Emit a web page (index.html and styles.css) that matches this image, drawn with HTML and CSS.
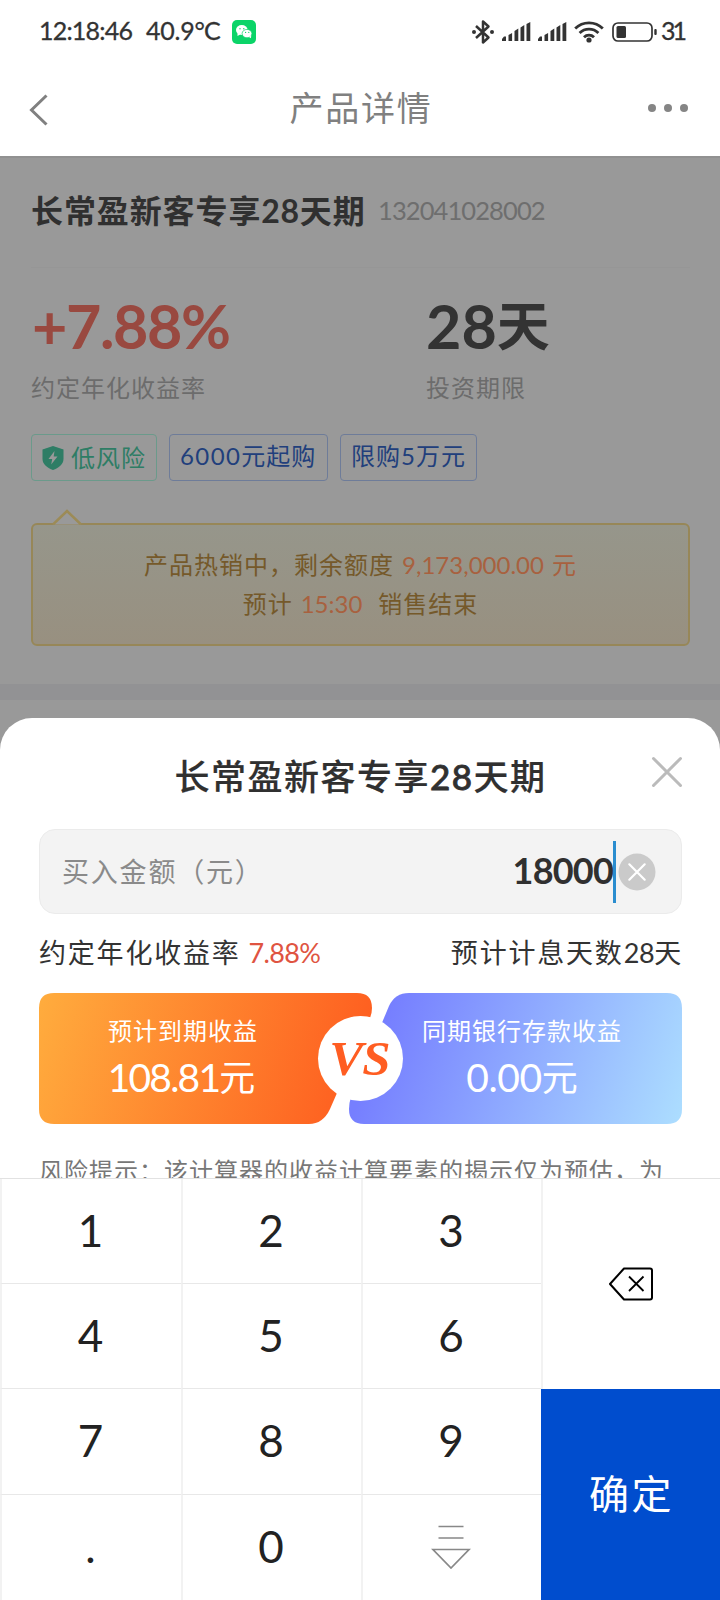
FILE: index.html
```html
<!DOCTYPE html>
<html lang="zh-CN">
<head>
<meta charset="utf-8">
<title>产品详情</title>
<link rel="stylesheet" href="styles.css">
</head>
<body>
<div class="screen">
  <div class="status">
    <span class="clock">12:18:46</span>
    <span class="temp">40.9<span class="deg">°</span>C</span>
    <svg class="wechat" width="24" height="24" viewBox="0 0 24 24"><rect width="24" height="24" rx="5" fill="#0bd468"/><ellipse cx="9.800" cy="10" rx="5.800" ry="4.900" fill="#fff"/><path d="M5.500 13 5.500 16 8.500 14.300z" fill="#fff"/><ellipse cx="15" cy="13.600" rx="4.900" ry="4.200" fill="#fff" stroke="#0bd468" stroke-width=".7"/><path d="M17 17l2 1.200.2-2.600z" fill="#fff"/><g fill="#0bd468"><circle cx="8" cy="8.700" r=".7"/><circle cx="11.800" cy="8.700" r=".7"/><circle cx="13.600" cy="12.400" r=".6"/><circle cx="16.800" cy="12.400" r=".6"/></g></svg>
    <div class="status-right">
      <svg class="bt" width="24" height="26" viewBox="0 0 24 26"><path d="M5 7 17.500 18.500 12 23.500V2.500L17.500 7.500 5 19" fill="none" stroke="#333" stroke-width="2.500" stroke-linejoin="round"/><circle cx="3" cy="13" r="2" fill="#333"/><circle cx="21" cy="13" r="2" fill="#333"/></svg>
      <svg class="sig" width="29" height="19" viewBox="0 0 29 19"><g fill="#333"><path d="M0 19v-2l2-2.500h2V19zM6.500 19v-6l3.600-2v8zM12.500 19V9l3.800-2.500V19zM18.500 19V5.500l3.800-2.500v16zM24.500 19V2l3.800-2v19z"/></g></svg>
      <svg class="sig2" width="29" height="19" viewBox="0 0 29 19"><g fill="#333"><path d="M0 19v-2l2-2.500h2V19zM6.500 19v-6l3.600-2v8zM12.500 19V9l3.800-2.500V19zM18.500 19V5.500l3.800-2.500v16zM24.500 19V2l3.800-2v19z"/></g></svg>
      <svg class="wifi" width="30" height="22" viewBox="0 0 30 22"><g fill="none" stroke="#333" stroke-width="2.800"><path d="M1.200 7.600a19.500 19.500 0 0 1 27.600 0"/><path d="M5.600 12a13.300 13.300 0 0 1 18.800 0"/><path d="M10 16.200a7.100 7.100 0 0 1 10 0"/></g><circle cx="15" cy="19" r="2.600" fill="#333"/></svg>
      <svg class="bat" width="46" height="20" viewBox="0 0 46 20"><rect x="1" y="1" width="39" height="18" rx="5" fill="none" stroke="#333" stroke-width="1.700"/><rect x="4.500" y="4" width="9.500" height="12" rx="1.500" fill="#333"/><rect x="42.300" y="7" width="2.400" height="6" rx="1" fill="#333"/></svg>
      <span class="pct">31</span>
    </div>
  </div>
  <div class="nav">
    <svg width="20" height="34" viewBox="0 0 20 34"><path d="M18.500 2.500 3.500 17l15 14.500" fill="none" stroke="#808080" stroke-width="3"/></svg>
    <h1 class="nav-title">产品详情</h1>
    <svg width="42" height="10" viewBox="0 0 42 10"><g fill="#858585"><circle cx="4" cy="5" r="4"/><circle cx="20" cy="5" r="4"/><circle cx="36" cy="5" r="4"/></g></svg>
  </div>
  <div class="product">
    <div class="p-head"><span class="p-name">长常盈新客专享<span class="p-days">28</span>天期</span><span class="p-id">132041028002</span></div>
    <div class="stats">
      <div class="stat"><div class="big rate">+7.88%</div><div class="cap">约定年化收益率</div></div>
      <div class="stat"><div class="big"><span class="n28">28</span><span class="day">天</span></div><div class="cap">投资期限</div></div>
    </div>
    <div class="tags">
      <span class="tag risk"><svg width="22" height="24" viewBox="0 0 22 24"><path d="M11 0 21.500 3.600V13c0 5.500-5 9-10.500 11C5.500 22 .5 18.500.5 13V3.600z" fill="#2e7d65"/><path d="M12.500 5 6.500 13h3.700l-1 5.500 6.300-8h-3.800z" fill="#999"/></svg>低风险</span>
      <span class="tag t2"><span class="n6">6000</span>元起购</span>
      <span class="tag t3">限购5万元</span>
    </div>
    <div class="notice">
      <svg class="tip" width="30" height="16" viewBox="0 0 30 16"><path d="M1 15.500 15 2l14 13.500" fill="#999" stroke="#9c8b57" stroke-width="2.500"/></svg>
      <div class="line l1">产品热销中，剩余额度<em class="amt">9,173,000.00</em><em>元</em></div>
      <div class="line l2">预计<em class="time">15:30</em>销售结束</div>
    </div>
    <div class="band"></div>
  </div>
  <div class="sheet">
    <div class="s-head"><h2>长常盈新客专享<span class="h-days">28</span>天期</h2>
      <svg class="close" width="32" height="32" viewBox="0 0 32 32"><path d="M2.500 2.500l27 27M29.500 2.500l-27 27" stroke="#bbb" stroke-width="3" stroke-linecap="round"/></svg>
    </div>
    <div class="field">
      <span class="f-label">买入金额（元）</span>
      <span class="f-value">18000</span><i class="cursor"></i>
      <svg width="38" height="38" viewBox="0 0 38 38"><circle cx="19" cy="19" r="18.500" fill="#cacaca"/><path d="M11.300 11.300l15.400 15.400M26.700 11.300 11.300 26.700" stroke="#fff" stroke-width="2.200" stroke-linecap="round"/></svg>
    </div>
    <div class="info"><span>约定年化收益率<b class="r2">7.88%</b></span><span class="days">预计计息天数<span class="d28">28</span>天</span></div>
    <div class="versus">
      <svg class="vs-bg" width="644" height="132" viewBox="0 0 644 132">
        <defs>
          <linearGradient id="o" gradientUnits="userSpaceOnUse" x1="0" y1="20" x2="310" y2="110"><stop offset="0" stop-color="#ffab3d"/><stop offset="1" stop-color="#fe5f20"/></linearGradient>
          <linearGradient id="b" gradientUnits="userSpaceOnUse" x1="345" y1="30" x2="640" y2="130"><stop offset="0" stop-color="#767fff"/><stop offset="1" stop-color="#acddff"/></linearGradient>
        </defs>
        <path d="M15 0H318Q333 0 333 15 333 20 331 25L291 116Q284 131 270 131H15Q0 131 0 116V15Q0 0 15 0z" fill="url(#o)"/>
        <path d="M370 0H628Q643 0 643 15V116Q643 131 628 131H325Q310 131 310 116 310 110 312 104L350 13Q356 0 370 0z" fill="url(#b)"/>
        <circle cx="321.500" cy="65.500" r="42.500" fill="#fff"/>
      </svg>
      <div class="card c1"><div class="c-label">预计到期收益</div><div class="c-num"><span class="n1">108.81</span><span class="yuan">元</span></div></div>
      <div class="vs"><span class="vs-text">VS</span></div>
      <div class="card c2"><div class="c-label">同期银行存款收益</div><div class="c-num"><span class="n0">0.00</span><span class="yuan">元</span></div></div>
    </div>
    <p class="hint">风险提示：该计算器的收益计算要素的揭示仅为预估，为</p>
  </div>
  <div class="pad">
    <div class="key">1</div><div class="key">2</div><div class="key">3</div>
    <div class="del"><svg width="46" height="34" viewBox="0 0 46 34"><path d="M2 17 16 1.500H42q2 0 2 2V30.500q0 2-2 2H16z" fill="none" stroke="#000" stroke-width="2" stroke-linejoin="round"/><path d="M21 9.500 35.500 24M35.500 9.500 21 24" stroke="#000" stroke-width="1.800"/></svg></div>
    <div class="key">4</div><div class="key">5</div><div class="key">6</div>
    <div class="key">7</div><div class="key">8</div><div class="key">9</div>
    <div class="ok">确定</div>
    <div class="key">.</div><div class="key">0</div>
    <div class="key"><svg width="40" height="46" viewBox="0 0 40 46"><g fill="none" stroke="#888" stroke-width="1.700"><path d="M7.500 3.500h25M7.500 15h25M2 26.500h36L20 45z"/></g></svg></div>
  </div>
</div>
</body>
</html>
```
FILE: styles.css
```css
* { box-sizing: border-box; }
body { margin: 0; font-family: Lato, "Noto Sans CJK SC", sans-serif; color: #303030; background: #fff; }
h1, h2, p { margin: 0; font-weight: 400; }
em, b { font-style: normal; font-weight: 400; }
svg { display: block; flex: none; }
.screen { width: 720px; height: 1600px; overflow: hidden; display: flex; flex-direction: column; white-space: nowrap; }

.status { height: 63px; padding: 0 0 0 39px; display: flex; align-items: center; font-size: 25px; line-height: 30px; color: #333; -webkit-text-stroke: 0.3px #333; }
.clock { width: 107px; letter-spacing: -0.8px; padding-bottom: 3px; }
.temp { width: 86px; letter-spacing: -0.2px; padding-bottom: 3px; }
.deg { letter-spacing: -1px; }
.status-right { margin-left: auto; display: flex; align-items: center; width: 249px; }
.bt, .sig, .sig2 { margin-right: 7px; }
.wifi { margin-right: 8px; }
.bat { margin-right: 3px; }
.pct { letter-spacing: -3px; padding-bottom: 3px; }

.nav { height: 93px; padding: 0 30px 0 28px; display: flex; align-items: center; justify-content: space-between; }
.nav-title { font-size: 34px; letter-spacing: 1.8px; line-height: 44px; color: #808080; margin: -3px 0 0 26px; }
.nav svg:last-child { margin-top: -3px; }

.product { flex: none; height: 612px; background: #999; border-top: 2px solid #919191; padding: 0 30px 0 31px; }
.p-head { height: 110px; display: flex; align-items: center; border-bottom: 1px solid #969696; padding-bottom: 5px; }
.p-name { font-size: 32px; font-weight: 700; letter-spacing: 0.9px; width: 347px; margin-top: -2px; }
.p-days { letter-spacing: 0.7px; }
.p-id { font-size: 25.5px; letter-spacing: -0.9px; color: #6e6e6e; }
.stats { height: 166px; display: grid; grid-template-columns: 395px 1fr; padding-top: 21px; }
.big { height: 74px; font-size: 61px; font-weight: 700; line-height: 74px; color: #333; display: flex; align-items: center; }
.rate { color: #994940; letter-spacing: -1.4px; padding-left: 1px; }
.n28 { letter-spacing: 0; }
.day { font-size: 53px; }
.cap { font-size: 24px; letter-spacing: 1px; line-height: 36px; color: #6c6c6c; margin-top: 7px; }
.tags { display: flex; gap: 12px; }
.tag { height: 47px; border: 1.5px solid #6e7c99; border-radius: 4px; font-size: 24px; letter-spacing: 1px; line-height: 42px; color: #213f7c; padding-left: 10px; }
.risk { width: 126px; display: flex; align-items: center; gap: 7px; color: #2e7d65; border-color: #6b9a8b; }
.t2 { width: 159px; }
.t3 { width: 137px; }
.n6 { letter-spacing: 1.4px; }
.notice { position: relative; margin-top: 42px; height: 123px; border: 2px solid #978758; border-radius: 6px; background: linear-gradient(#96968b, #989080); padding-top: 20px; font-size: 24px; letter-spacing: 1px; line-height: 39px; color: #75592a; text-align: center; }
.tip { position: absolute; left: 19px; top: -16px; }
.line em { color: #a8613f; }
.line .amt { letter-spacing: 0; margin: 0 8px; }
.line .time { letter-spacing: 0; margin: 0 16px 0 8px; }
.band { height: 16px; margin: 38px -30px 0 -31px; background: #929294; }

.sheet { flex: none; height: 460px; margin-top: -50px; background: #fff; border-radius: 32px 32px 0 0; padding: 0 38px 0 39px; overflow: hidden; }
.s-head { height: 111px; position: relative; display: flex; justify-content: center; padding-top: 35px; }
.s-head h2 { font-size: 35px; line-height: 46px; font-weight: 500; letter-spacing: 1.5px; -webkit-text-stroke: 0.2px #303030; }
.h-days { -webkit-text-stroke: 0.8px #303030; }
.close { position: absolute; right: -1px; top: 38px; }
.field { height: 85px; border: 1.5px solid #ebebeb; border-radius: 16px; background: #f3f3f3; display: flex; align-items: center; padding: 0 25px 0 22px; }
.f-label { font-size: 27px; letter-spacing: 1.8px; color: #8a8a8a; flex: 1; padding-bottom: 2px; }
.f-value { font-size: 36px; font-weight: 700; letter-spacing: -0.8px; padding-bottom: 3px; }
.cursor { width: 3px; height: 62px; background: #2a8dcf; margin-right: 2px; }
.info { height: 79px; padding-bottom: 5px; display: flex; justify-content: space-between; align-items: center; font-size: 27px; letter-spacing: 1.8px; color: #333; }
.r2 { color: #df5441; letter-spacing: -0.7px; margin-left: 8px; }
.days { margin-right: -1px; }
.d28 { letter-spacing: -0.4px; }
.versus { height: 132px; position: relative; display: grid; grid-template-columns: 280px 83px 1fr; }
.vs-bg { position: absolute; left: 0; top: 0; }
.card, .vs { position: relative; text-align: center; color: #fff; }
.c-label { font-size: 24px; letter-spacing: 1px; line-height: 36px; padding-top: 20px; }
.c-num { font-size: 39px; line-height: 57px; display: flex; justify-content: center; align-items: center; }
.yuan { font-size: 36px; }
.c1 { padding-left: 8px; }
.c1 .c-num { padding-right: 3px; }
.c2 { padding-right: 40px; }
.n1 { letter-spacing: -1.8px; }
.n0 { letter-spacing: -0.4px; }
.vs-text { letter-spacing: -1px; transform: scaleX(1.06); margin-left: -2px; }
.vs { font-family: "Liberation Serif", serif; font-style: italic; font-weight: 700; font-size: 48px; line-height: 132px; color: #ff5d22; display: flex; justify-content: center; }
.hint { font-size: 24px; letter-spacing: 1px; line-height: 36px; color: #777; margin-top: 28px; }

.pad { flex: none; height: 422px; display: grid; grid-template-columns: 181px 180px 180px 179px; grid-template-rows: 105px 105px 106px 106px; border-top: 1px solid #e2e2e2; background: #fff; }
.key { border-left: 2px solid #f2f2f2; border-bottom: 1px solid #e8e8e8; font-size: 44px; color: #222; display: flex; align-items: center; justify-content: center; padding: 0 2px 3px 0; }
.del { grid-column: 4; grid-row: 1 / 3; border-left: 2px solid #f2f2f2; display: flex; align-items: center; justify-content: center; padding: 0 1px 1px 0; }
.ok { grid-column: 4; grid-row: 3 / 5; background: #004dce; color: #fff; font-size: 40px; letter-spacing: 2.5px; display: flex; align-items: center; justify-content: center; padding: 0 0 7px 2px; }
```
